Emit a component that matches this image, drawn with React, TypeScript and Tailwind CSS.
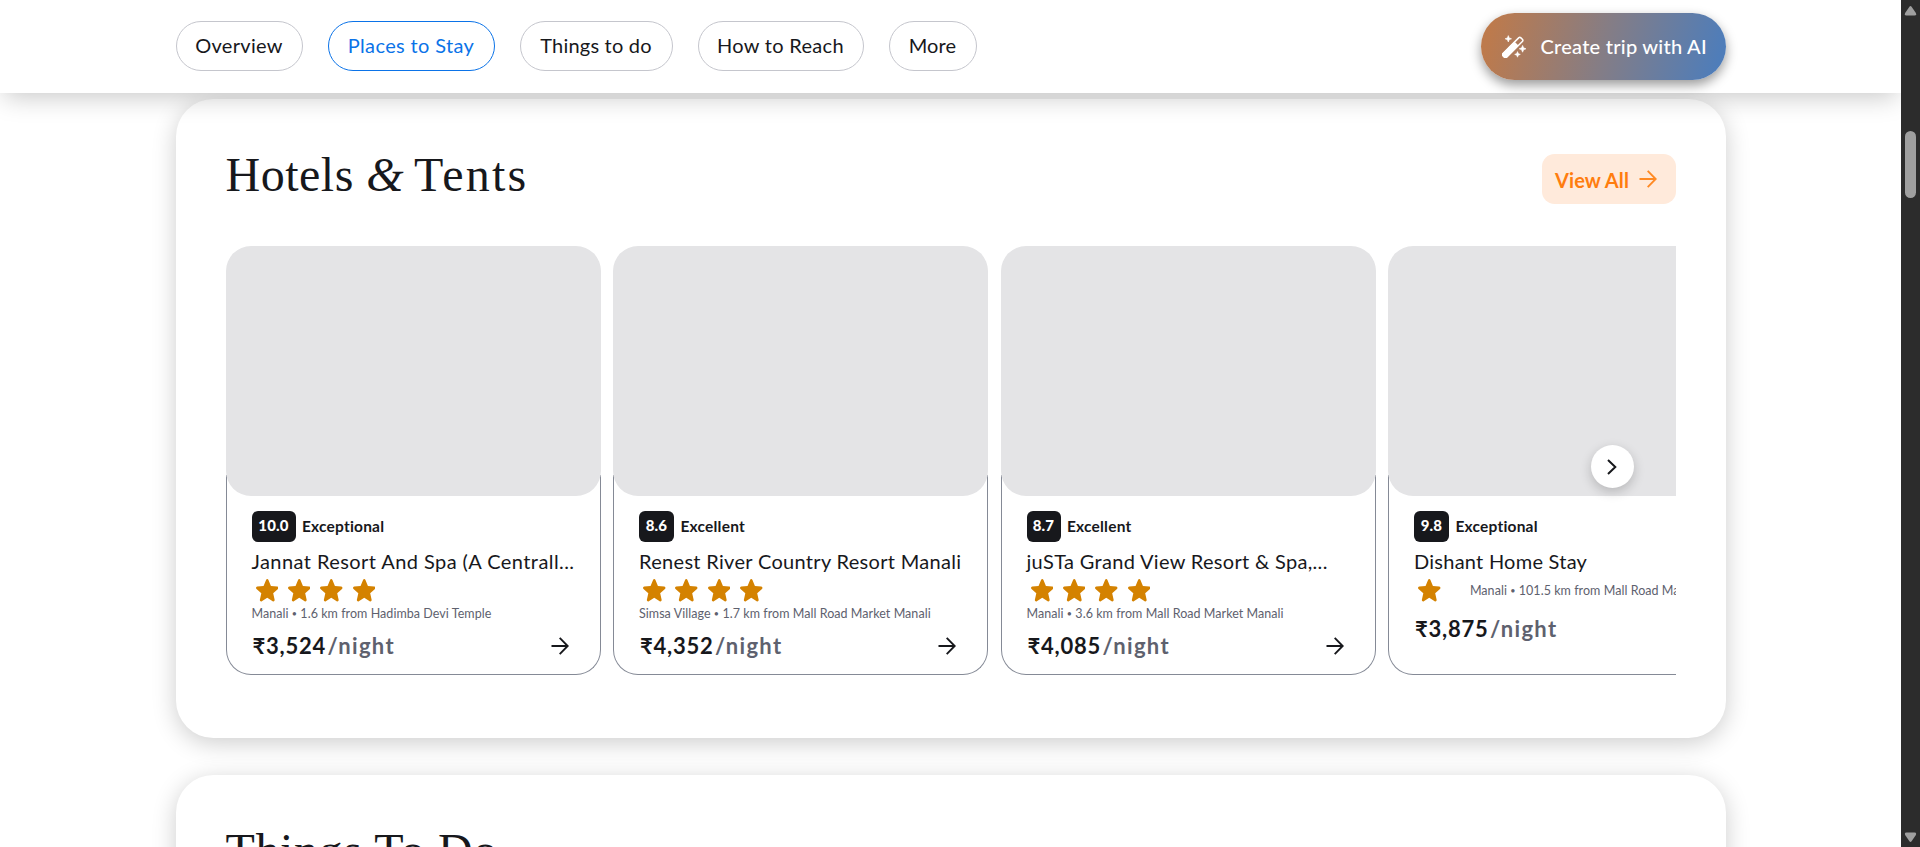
const tabs = [
  { label: "Overview", box: "w-[127px] tracking-[0.3px]" },
  { label: "Places to Stay", box: "w-[167px] tracking-[0.36px]", active: true },
  { label: "Things to do", box: "w-[153px] tracking-[0.22px]" },
  { label: "How to Reach", box: "w-[166px] tracking-[0.3px]" },
  { label: "More", box: "w-[88px] tracking-[0.15px]" },
];

const hotels = [
  {
    score: "10.0",
    badge: "w-[44px]",
    rating: "Exceptional",
    name: "Jannat Resort And Spa (A Centrall...",
    nameTracking: "tracking-[0.43px]",
    stars: 4,
    town: "Manali",
    distance: "1.6 km from Hadimba Devi Temple",
    price: "₹3,524",
  },
  {
    score: "8.6",
    badge: "w-[35px]",
    rating: "Excellent",
    name: "Renest River Country Resort Manali",
    nameTracking: "tracking-[0.31px]",
    stars: 4,
    town: "Simsa Village",
    distance: "1.7 km from Mall Road Market Manali",
    price: "₹4,352",
  },
  {
    score: "8.7",
    badge: "w-[34px]",
    rating: "Excellent",
    name: "juSTa Grand View Resort & Spa,...",
    nameTracking: "tracking-[0.32px]",
    stars: 4,
    town: "Manali",
    distance: "3.6 km from Mall Road Market Manali",
    price: "₹4,085",
  },
  {
    score: "9.8",
    badge: "w-[35px]",
    rating: "Exceptional",
    name: "Dishant Home Stay",
    nameTracking: "tracking-[0.25px]",
    stars: 1,
    town: "Manali",
    distance: "101.5 km from Mall Road Market Manali",
    price: "₹3,875",
    inline: true,
  },
];

function Arrow({ className }: { className: string }) {
  return (
    <svg
      viewBox="0 0 18 18"
      className={`h-[18px] w-[18px] shrink-0 fill-none stroke-[1.9] ${className}`}
    >
      <path d="M0.5 9H16.5M8.7 0.9L16.7 9L8.7 17.1" />
    </svg>
  );
}

function Wand() {
  return (
    <svg viewBox="0 0 24 23" className="h-[23px] w-[24px] shrink-0 fill-white">
      <g transform="translate(11 12.2) rotate(-45)">
        <rect
          x="-13.2"
          y="-2.6"
          width="25.4"
          height="5.2"
          rx="1.6"
          className="fill-none stroke-white stroke-[1.5]"
        />
        <rect x="-13.6" y="-3" width="18.6" height="6" rx="1" />
      </g>
      <path d="M6.3 0.6L7.2 2.9L9.5 3.8L7.2 4.7L6.3 7L5.4 4.7L3.1 3.8L5.4 2.9Z" className="stroke-white stroke-[0.6]" />
      <path d="M20.6 10.4L21.6 12.8L24 13.8L21.6 14.8L20.6 17.2L19.6 14.8L17.2 13.8L19.6 12.8Z" className="stroke-white stroke-[0.6]" />
      <path d="M15.5 16.6L16.3 18.6L18.3 19.4L16.3 20.2L15.5 22.2L14.7 20.2L12.7 19.4L14.7 18.6Z" className="stroke-white stroke-[0.6]" />
    </svg>
  );
}

function Star() {
  return (
    <svg
      viewBox="3.4 3.5 17.2 16.5"
      preserveAspectRatio="none"
      className="h-[22.5px] w-[22.5px] shrink-0 fill-[#d48200]"
    >
      <path d="M12 17.27l4.15 2.51c.76.46 1.69-.22 1.49-1.08l-1.1-4.72 3.67-3.18c.67-.58.31-1.68-.57-1.75l-4.83-.41-1.89-4.46c-.34-.81-1.5-.81-1.84 0L9.19 8.63l-4.83.41c-.88.07-1.24 1.17-.57 1.75l3.67 3.18-1.1 4.72c-.2.86.73 1.54 1.49 1.08l4.15-2.5z" />
    </svg>
  );
}

function HotelCard({ hotel }: { hotel: (typeof hotels)[number] }) {
  const place = (
    <div className="h-[15px] text-[12.5px] leading-[15px] tracking-[0.05px] whitespace-nowrap text-[#5e616e]">
      {hotel.town} <span className="align-[1px] text-[9px] leading-none">•</span>{" "}
      {hotel.distance}
    </div>
  );
  return (
    <div className="w-[375px] shrink-0">
      <div className="relative h-[250px] rounded-[25px] bg-[#e4e4e6]" />
      <div className="-mt-[21px] h-[200px] rounded-b-[25px] border-x border-b border-[#858a96] px-[25px] pt-[36px]">
        <div className="flex h-[31px] items-center gap-[6.5px]">
          <span
            className={`flex h-[31px] items-center justify-center rounded-[6px] bg-[#17181c] pb-[3px] text-[15px] leading-[18px] font-black tracking-[0.2px] text-white ${hotel.badge}`}
          >
            {hotel.score}
          </span>
          <span className="pb-px text-[15.5px] leading-[20px] font-bold tracking-[0.2px]">
            {hotel.rating}
          </span>
        </div>
        <div
          className={`mt-[4px] h-[30px] text-[20px] leading-[30px] whitespace-nowrap ${hotel.nameTracking}`}
        >
          {hotel.name}
        </div>
        <div className="mt-[2px] flex h-[25px] items-center gap-[9.9px] pl-[4px]">
          {Array.from({ length: hotel.stars }, (_, i) => (
            <Star key={i} />
          ))}
          {hotel.inline && <div className="pl-[19.5px]">{place}</div>}
        </div>
        {!hotel.inline && <div className="mt-[3px] mb-[-1px]">{place}</div>}
        <div className="mt-[11px] flex h-[30px] items-center justify-between pr-[6px] pl-px text-[22px] leading-[30px] font-bold">
          <div>
            <span className="tracking-[0.75px]">{hotel.price}</span>
            <span className="ml-[1.5px] tracking-[1.3px] text-[#5e616e]">/night</span>
          </div>
          {!hotel.inline && <Arrow className="stroke-[#17181c]" />}
        </div>
      </div>
    </div>
  );
}

function Scrollbar() {
  return (
    <div className="flex h-full w-[19px] shrink-0 flex-col items-center bg-[#2c2c2c]">
      <svg viewBox="0 0 13 11" className="mt-[6px] h-[10px] w-[13px] fill-[#9f9f9f]">
        <path d="M5.3 0.8Q6.5-.6 7.7 0.8L12.4 7.8Q13.4 10.4 11 10.4H2Q-.4 10.4.6 7.8Z" />
      </svg>
      <div className="mt-[115px] h-[67px] w-[11px] rounded-full bg-[#9f9f9f]" />
      <svg
        viewBox="0 0 13 11"
        className="mt-auto mb-[5px] h-[10px] w-[13px] rotate-180 fill-[#9f9f9f]"
      >
        <path d="M5.3 0.8Q6.5-.6 7.7 0.8L12.4 7.8Q13.4 10.4 11 10.4H2Q-.4 10.4.6 7.8Z" />
      </svg>
    </div>
  );
}

const panel =
  "mx-auto w-[1550px] shrink-0 rounded-[37.5px] bg-white shadow-[0_5px_25px_rgba(0,0,0,0.2)]";
const heading =
  "h-[56px] font-['Liberation_Serif',serif] text-[48px] leading-[56px] font-normal whitespace-nowrap";

export default function App() {
  return (
    <div className="flex h-[847px] w-[1920px] overflow-hidden bg-white font-['Lato','Noto_Sans',sans-serif] text-[#17181c]">
      <div className="flex w-[1901px] flex-col overflow-hidden">
        <header className="relative z-10 h-[93px] shrink-0 bg-white shadow-[0_8px_24px_-4px_rgba(0,0,0,0.22)]">
          <div className="mx-auto flex h-[92px] w-[1550px] items-center justify-between">
            <nav className="flex gap-[25px]">
              {tabs.map((tab) => (
                <button
                  key={tab.label}
                  className={`h-[50px] rounded-[25px] border pb-[3px] text-[20px] leading-[24px] whitespace-nowrap ${
                    tab.active
                      ? "border-[#0b73e8] text-[#0b73e8]"
                      : "border-[#c5c6cd]"
                  } ${tab.box}`}
                >
                  {tab.label}
                </button>
              ))}
            </nav>
            <button className="mt-px flex h-[67px] w-[245px] items-center rounded-[33.5px] bg-[linear-gradient(105deg,#bd7a4c_5%,#857d85_50%,#4f7db9_95%)] pl-[21px] text-white shadow-[0_5px_12px_rgba(0,0,0,0.4)]">
              <Wand />
              <span className="ml-[15px] pb-[2px] text-[20px] leading-[24px] font-medium tracking-[0.25px] whitespace-nowrap">
                Create trip with AI
              </span>
            </button>
          </div>
        </header>

        <section className={`${panel} mt-[6px] h-[639px] px-[50px] pt-[48px]`}>
          <div className="flex justify-between">
            <h2 className={heading}>
              <span className="tracking-[0.5px]">Hotels </span>
              <span className="italic">&amp;</span>
              <span className="-ml-[3px] tracking-[2.2px]"> Tents</span>
            </h2>
            <button className="mt-[7px] flex h-[50px] w-[134px] items-center rounded-[12.5px] bg-[#ffeadb] pl-[13.5px] text-[#ff7d0f]">
              <span className="pt-px text-[20px] leading-[24px] font-bold tracking-[0.1px] whitespace-nowrap">
                View All
              </span>
              <Arrow className="mr-[18.5px] ml-auto stroke-[#ff8a24]" />
            </button>
          </div>
          <div className="relative mt-[42px]">
            <div className="flex gap-[12.5px] overflow-hidden">
              {hotels.map((hotel) => (
                <HotelCard key={hotel.name} hotel={hotel} />
              ))}
            </div>
            <button className="absolute top-[199px] right-[42px] flex h-[43px] w-[43px] items-center justify-center rounded-full bg-white shadow-[0_4px_12px_rgba(0,0,0,0.2)]">
              <svg viewBox="0 0 10 16" className="h-[16px] w-[10px] fill-none stroke-[#17181c] stroke-2">
                <path d="M1 1L8.3 8L1 15" />
              </svg>
            </button>
          </div>
        </section>

        <section className={`${panel} mt-[37px] h-[600px] px-[50px] pt-[48px]`}>
          <h2 className={`${heading} tracking-[0.6px]`}>Things To Do</h2>
        </section>
      </div>
      <Scrollbar />
    </div>
  );
}
